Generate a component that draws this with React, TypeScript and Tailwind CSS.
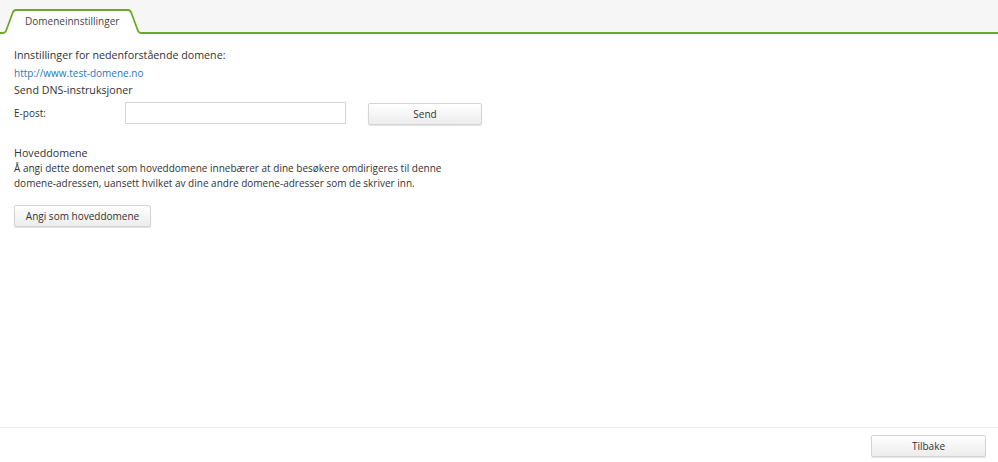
import React from 'react';

const font = { fontFamily: '"Open Sans", "Liberation Sans", sans-serif' };

const Button: React.FC<{ children: React.ReactNode; className?: string }> = ({ children, className = '' }) => (
  <button
    className={`h-[22px] rounded-[2px] border border-[#d4d4d4] bg-gradient-to-b from-white to-[#ececec] text-[10px] text-[#333] shadow-[0_1px_1px_rgba(0,0,0,0.12)] ${className}`}
  >
    {children}
  </button>
);

export default function App() {
  return (
    <div className="flex h-[462px] w-[998px] flex-col bg-white text-[#333]" style={font}>
      {/* Tab bar */}
      <div className="relative h-[34px] bg-[#f6f6f6]">
        <svg className="absolute left-0 top-0" width="998" height="34" viewBox="0 0 998 34">
          <path
            d="M0 33 L3 33 Q5 33 6 31 L13 12 Q14 10 16 10 L128 10 Q130 10 131 12 L138 31 Q139 33 141 33 L998 33 L998 34 L0 34 Z"
            fill="white"
          />
          <path
            d="M0 33 L3 33 Q5 33 6 31 L13 12 Q14 10 16 10 L128 10 Q130 10 131 12 L138 31 Q139 33 141 33 L998 33"
            fill="none"
            stroke="#6aaa26"
            strokeWidth="1.8"
          />
        </svg>
        <span className="absolute left-[25px] top-[14px] text-[10px] leading-[14px] text-[#444]">Domeneinnstillinger</span>
      </div>

      {/* Content */}
      <div className="flex-1 px-[14px] pt-[13px]">
        <div className="text-[10.7px] leading-[16px]">Innstillinger for nedenforstående domene:</div>
        <div className="mt-[3px] text-[10px] leading-[14px] text-[#2a78b8]">http://www.test-domene.no</div>
        <div className="mt-[2px] text-[10.7px] leading-[16px]">Send DNS-instruksjoner</div>
        <div className="mt-[3px] flex items-center">
          <label className="w-[111px] text-[10px]">E-post:</label>
          <input className="h-[22px] w-[221px] border border-[#d6d6d6] bg-white outline-none" />
          <Button className="ml-[22px] mt-[2px] w-[114px]">Send</Button>
        </div>

        <div className="mt-[20px] text-[10.7px] leading-[16px]">Hoveddomene</div>
        <p className="text-[10px] leading-[15px]">
          Å angi dette domenet som hoveddomene innebærer at dine besøkere omdirigeres til denne
          <br />
          domene-adressen, uansett hvilket av dine andre domene-adresser som de skriver inn.
        </p>
        <Button className="mt-[14px] w-[137px]">Angi som hoveddomene</Button>
      </div>

      {/* Footer */}
      <div className="flex h-[35px] justify-end border-t border-[#ececec] pr-[12px] pt-[7px]">
        <Button className="w-[115px]">Tilbake</Button>
      </div>
    </div>
  );
}
